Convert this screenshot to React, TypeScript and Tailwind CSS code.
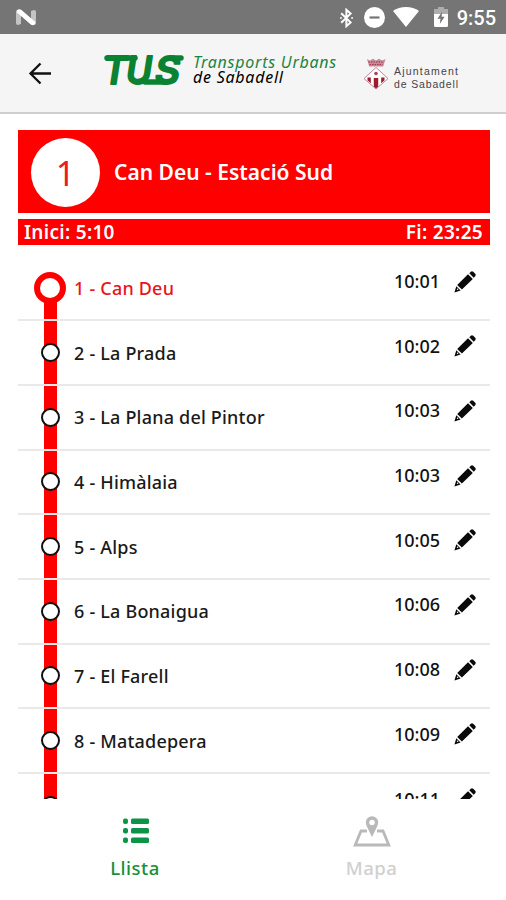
import { clsx } from 'clsx';

interface Stop {
  id: number;
  name: string;
  time: string;
}

const stops: Stop[] = [
  { id: 1, name: 'Can Deu', time: '10:01' },
  { id: 2, name: 'La Prada', time: '10:02' },
  { id: 3, name: 'La Plana del Pintor', time: '10:03' },
  { id: 4, name: 'Himàlaia', time: '10:03' },
  { id: 5, name: 'Alps', time: '10:05' },
  { id: 6, name: 'La Bonaigua', time: '10:06' },
  { id: 7, name: 'El Farell', time: '10:08' },
  { id: 8, name: 'Matadepera', time: '10:09' },
  { id: 9, name: 'La Romànica', time: '10:11' },
];

function StatusBar() {
  return (
    <div className="flex h-[34px] shrink-0 items-center bg-[#757575] pl-4 pr-[10px] text-white">
      <svg className="mt-px h-[17px] w-5" viewBox="0 0 20 17">
        <path d="M0 2.5Q0 .8 1.8 .8L5 1v14l-3 1q-2 0-2-2zM15 2l3-1q2 0 2 2v11q0 2-2 2l-3-1z" fill="#c4c4c4" />
        <path d="M1 1.5Q3-.6 5.5 1L18.8 12.5Q20 14 18.5 15.5 16.5 17 14.5 15.3L1 3.5z" fill="#fff" />
      </svg>
      <div className="flex-1" />
      <svg className="mt-px mr-[11px] h-5 w-[13px]" viewBox="0 0 13 20" fill="none" stroke="#fff" strokeWidth="2">
        <path d="M1.2 5.2l9.4 9.2-4.2 3.8V1.8l4.2 3.8-9.4 9.2" />
        <path d="M.8 9.2v1.6M12.2 9.2v1.6" />
      </svg>
      <svg className="mt-px mr-[8px] h-[21px] w-[21px]" viewBox="0 0 21 21">
        <circle cx="10.5" cy="10.5" r="10.5" fill="#fff" />
        <path d="M5.5 10.5h10" stroke="#757575" strokeWidth="2.2" />
      </svg>
      <svg className="mr-[15px] h-5 w-[26px]" viewBox="0 0 26 20">
        <path d="M13 20L0 4Q5.5 0 13 0t13 4z" fill="#fff" />
      </svg>
      <svg className="mr-[9px] h-5 w-[14px]" viewBox="0 0 14 20">
        <path d="M4 0h6v2h4v6H0V2h4z" fill="#adadad" />
        <path d="M0 7h14v11.5q0 1.5-1.5 1.500h-11Q0 20 0 18.5z" fill="#fff" />
        <path d="M8.2 4.5L3.5 11.7h3L5.8 17l4.8-7.2H7.6z" fill="#757575" />
      </svg>
      <span className="mt-0.5 font-[Roboto] text-[20px] leading-none font-medium">9:55</span>
    </div>
  );
}

function TusLogo() {
  return (
    <svg className="mt-5 ml-[52px] h-9 w-[83px] shrink-0 overflow-visible" viewBox="0 0 83 36">
      <text
        className="font-[Inter] text-[38px] font-semibold italic"
        y="30"
        fill="#0a8232"
        stroke="#0a8232"
        strokeWidth="1.800"
        strokeLinejoin="round"
      >
        <tspan x="-1" textLength="24" lengthAdjust="spacingAndGlyphs">T</tspan>
        <tspan x="22" textLength="26" lengthAdjust="spacingAndGlyphs">U</tspan>
        <tspan x="51" textLength="25" lengthAdjust="spacingAndGlyphs">S</tspan>
      </text>
      {/* Bars that join the three letters */}
      <path d="M3 4h28M41 28h20M69 4h8" stroke="#0a8232" strokeWidth="5.500" strokeLinecap="round" />
    </svg>
  );
}

function CityCrest() {
  return (
    <svg className="h-8 w-[26px] shrink-0" viewBox="0 0 26 32">
      <path d="M4 1l3 1.5L10 .8l3 1.7L16 .8l3 1.7L22.500 1l-2.300 7.500h-14z" fill="#c98b98" />
      <path d="M5.500 4h15M6.500 6.600h13" stroke="#9c3349" strokeWidth="1" strokeDasharray="1.500 1" />
      <path d="M13 9.500L25 20.500 13 31 1 20.500z" fill="#fff" stroke="#c58794" strokeWidth="1" />
      <path d="M4.500 19.500h3.300v5.700l-3.300-3zM10.800 20h4.400v8.500l-2.200 1.900-2.200-1.900zM18.200 19.500h3.300v2.700l-3.300 3z" fill="#9b1c2c" />
      <circle cx="13" cy="15.500" r="1.800" fill="#a94454" />
    </svg>
  );
}

function Header() {
  return (
    <header className="relative z-10 flex h-20 shrink-0 items-start border-b-2 border-[#cfcfcf] bg-[#f5f5f5]">
      <svg className="mt-7 ml-7 h-[23px] w-6 shrink-0" viewBox="0 0 24 23" fill="none" stroke="#111" strokeWidth="2.300">
        <path d="M23 11.500H2.500M12.500 1.500l-10 10 10 10" />
      </svg>
      <TusLogo />
      <div className="mt-[21px] ml-[6px] w-[171px] shrink-0 text-[16px] leading-[15px] tracking-[0.750px] whitespace-nowrap italic">
        <div className="text-[#1c8440]">Transports Urbans</div>
        <div className="text-black">de Sabadell</div>
      </div>
      <div className="mt-6 -ml-px flex">
        <CityCrest />
        <div className="mt-[7px] ml-[5px] font-['Liberation_Sans'] text-[10.500px] leading-[13px] whitespace-nowrap text-[#444]">
          <div className="tracking-[1.200px]">Ajuntament</div>
          <div className="tracking-[0.850px]">de Sabadell</div>
        </div>
      </div>
    </header>
  );
}

function PencilIcon() {
  return (
    <svg className="h-[22px] w-[22px]" viewBox="0 0 22 22" fill="#0a0a0a">
      <path d="M14 3.200l4.800 4.800L7.900 18.600 3.200 13.900zM15.300 2.300l1.500-1.500q1.200-1 2.400 0l2 2q1 1.200 0 2.400l-1.500 1.500zM2.300 15.200l4.300 4.300L.4 21.600z" />
      <circle cx="3.600" cy="18.300" r=".7" fill="#fff" />
    </svg>
  );
}

function StopRow({ stop, first }: { stop: Stop; first: boolean }) {
  return (
    <li className="flex h-[64.700px] shrink-0 border-b-2 border-[#e9e9e9]">
      {/* Route line with the stop marker on it */}
      <div className="relative ml-4 flex w-8 items-center justify-center">
        <div className={clsx('absolute bottom-0 left-[10px] w-[13px] bg-[#ff0000]', first ? 'top-8' : 'top-0')} />
        <div
          className={clsx(
            'relative shrink-0 rounded-full bg-white',
            first ? 'size-8 border-[6.500px] border-[#ff0000]' : 'size-[19px] border-[2.500px] border-[#111]',
          )}
        />
      </div>
      <div className={clsx('ml-2 flex-1 pt-[19.500px] text-[18px] leading-6 font-medium tracking-[0.200px]', first ? 'text-[#e8141c]' : 'text-[#1a1a1a]')}>
        {stop.id} - {stop.name}
      </div>
      <div className="mr-[14px] pt-[12.500px] text-[18px] leading-6 font-medium text-[#111]">{stop.time}</div>
      <div className="mr-[14px] pt-[14px]">
        <PencilIcon />
      </div>
    </li>
  );
}

function TabBar() {
  return (
    <nav className="flex h-[101px] shrink-0 px-[17px] pt-[19px] text-[18.500px] leading-6 font-medium tracking-[0.500px]">
      <div className="flex flex-1 flex-col items-center text-[#16903a]">
        <svg className="mb-[12px] ml-0.5 h-[26px] w-[26px]" viewBox="0 0 26 26" fill="#0d9347">
          {[0.5, 10, 19.5].map(y => (
            <g key={y}>
              <rect x="0" y={y} width="5" height="5.500" rx="2" />
              <rect x="8" y={y} width="18" height="5.500" rx="1.500" />
            </g>
          ))}
        </svg>
        <span>Llista</span>
      </div>
      <div className="flex flex-1 flex-col items-center text-[#d0d0d0]">
        <svg className="-mt-[2px] mb-[9px] ml-0.5 h-[31px] w-[38px]" viewBox="0 0 38 31" fill="none" stroke="#b9b9b9">
          <path d="M14 15H8L2.200 29h33.600L30 15h-6" strokeWidth="2.800" />
          <path d="M13.500 9.500Q15 13 19 21q4-8 5.500-11.500z" fill="#b9b9b9" stroke="none" />
          <circle cx="19" cy="6.500" r="4.500" fill="#fff" strokeWidth="3.400" />
        </svg>
        <span className="ml-px">Mapa</span>
      </div>
    </nav>
  );
}

export default function App() {
  return (
    <div className="flex h-[900px] w-[506px] flex-col overflow-hidden bg-white font-['Noto_Sans',sans-serif]">
      <StatusBar />
      <Header />

      <main className="flex min-h-0 flex-1 flex-col pt-4 pr-[16px] pl-[18px]">
        {/* Line banner */}
        <div className="flex h-[83px] shrink-0 items-center bg-[#ff0000] pl-[13px]">
          <div className="mt-px flex size-[69px] items-center justify-center rounded-full bg-white pt-0.5 text-[34px] leading-none font-normal text-[#ed1c1c]">
            1
          </div>
          <span className="mt-[2px] ml-[14px] text-[21px] font-semibold text-white">Can Deu - Estació Sud</span>
        </div>
        <div className="mt-[6px] flex h-[26px] shrink-0 items-center justify-between bg-[#ff0000] pt-px pr-[7px] pl-[6px] text-[19px] font-semibold tracking-[0.300px] text-white">
          <span>Inici: 5:10</span>
          <span>Fi: 23:25</span>
        </div>

        {/* Stops, cut off by the tab bar */}
        <ul className="mt-[11.500px] flex min-h-0 flex-1 flex-col overflow-hidden">
          {stops.map(stop => (
            <StopRow key={stop.id} stop={stop} first={stop.id === 1} />
          ))}
        </ul>
      </main>

      <TabBar />
    </div>
  );
}
